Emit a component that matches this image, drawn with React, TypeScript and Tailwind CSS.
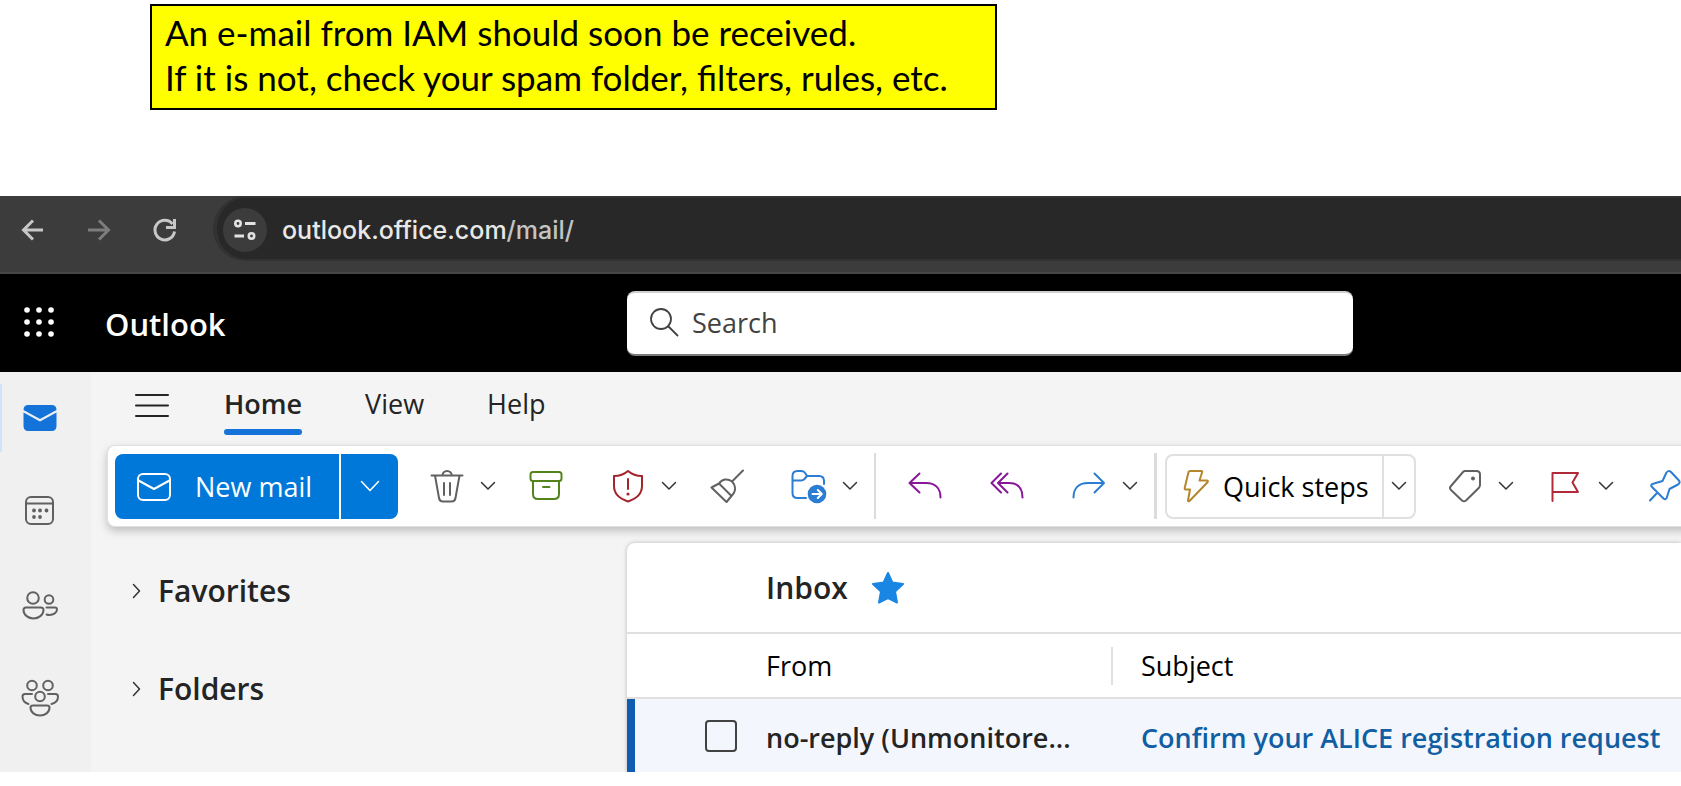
import React from 'react';

interface IconProps {
  className?: string;
  width?: number;
  height?: number;
  children: React.ReactNode;
}

function Icon({ className = '', width = 34, height = 34, children }: IconProps) {
  return (
    <svg
      className={`shrink-0 ${className}`}
      width={width}
      height={height}
      viewBox={`0 0 ${width} ${height}`}
      fill="none"
      stroke="currentColor"
      strokeWidth="2"
      strokeLinecap="round"
      strokeLinejoin="round"
      aria-hidden="true"
    >
      {children}
    </svg>
  );
}

function ChevronDown({ className = '' }: { className?: string }) {
  return (
    <Icon width={16} height={10} className={className}>
      <path d="M1.5 1.5 8 8l6.5-6.5" strokeWidth="1.5" />
    </Icon>
  );
}

function ChevronRight() {
  return (
    <Icon width={10} height={16} className="text-[#333333]">
      <path d="M1.5 1.5 7.5 8l-6 6.5" strokeWidth="1.5" />
    </Icon>
  );
}

interface ToolProps {
  label: string;
  menu?: boolean;
  className?: string;
  children: React.ReactNode;
}

function Tool({ label, menu = false, className = '', children }: ToolProps) {
  return (
    <div className={`flex shrink-0 items-center ${className}`}>
      <button type="button" aria-label={label} className="flex h-16 w-[50px] items-center justify-center">
        {children}
      </button>
      {menu && (
        <button type="button" aria-label={`${label} options`} className="flex h-16 w-8 items-center justify-center">
          <ChevronDown className="text-[#333333]" />
        </button>
      )}
    </div>
  );
}

function Notice() {
  return (
    <div className="px-[150px] pt-1">
      <div className="max-w-[847px] border-2 border-black bg-[#ffff00] pt-1 pr-2 pb-2 pl-[13px] font-['Lato',sans-serif] text-[35px] leading-[45px] text-black">
        <p>An e-mail from IAM should soon be received.</p>
        <p>If it is not, check your spam folder, filters, rules, etc.</p>
      </div>
    </div>
  );
}

function BrowserBar() {
  return (
    <div className="flex h-[78px] border-b-2 border-[#464646] bg-[#3c3c3c] pb-[11px]">
      <div className="flex w-[213px] shrink-0 items-center gap-8 pt-[2px] pl-4 text-[#c7c7c7]">
        <button type="button" aria-label="Back">
          <Icon>
            <path d="M27 17H8M17 7.5 7.5 17l9.5 9.5" strokeWidth="3" strokeLinecap="butt" strokeLinejoin="miter" />
          </Icon>
        </button>
        <button type="button" aria-label="Forward" className="text-[#7d7d7d]">
          <Icon>
            <path d="M6 17h20M17 7.5 26.5 17 17 26.5" strokeWidth="3" strokeLinecap="butt" strokeLinejoin="miter" />
          </Icon>
        </button>
        <button type="button" aria-label="Reload">
          <Icon>
            <path d="M26.5 18.5A9.8 9.8 0 1 1 24.5 11" strokeWidth="3" strokeLinecap="butt" />
            <path d="M26.5 6v8.5H18" strokeWidth="3" strokeLinecap="butt" strokeLinejoin="miter" />
          </Icon>
        </button>
      </div>
      <div className="flex flex-1 items-center rounded-l-full border-y-2 border-l-4 border-[#323232] bg-[#282828] pt-[2px] pl-[6px]">
        <button
          type="button"
          aria-label="View site information"
          className="flex h-11 w-11 shrink-0 items-center justify-center rounded-full bg-[#3c3c3c] text-[#e3e3e3]"
        >
          <Icon width={24} height={24}>
            <circle cx="5" cy="5.5" r="2.7" strokeWidth="2.6" />
            <path d="M12 5.5h10.5M1.5 18H11" strokeWidth="3" strokeLinecap="butt" />
            <circle cx="18.5" cy="18" r="2.7" strokeWidth="2.6" />
          </Icon>
        </button>
        <a href="#mail" className="ml-[15px] font-['Inter',sans-serif] text-[25px] leading-8 font-medium text-[#e8e8e8]">
          outlook.office.com<span className="text-[#c4c4c4]">/mail/</span>
        </a>
      </div>
    </div>
  );
}

function SuiteHeader() {
  const dots = [3, 15, 27];
  return (
    <header className="flex h-[98px] items-center bg-black text-white">
      <div className="flex w-[627px] shrink-0 items-center pb-[2px]">
        <button type="button" aria-label="App launcher" className="ml-6">
          <Icon width={30} height={30}>
            {dots.map((y) => dots.map((x) => <circle key={`${x}-${y}`} cx={x} cy={y} r="2.8" fill="currentColor" stroke="none" />))}
          </Icon>
        </button>
        <h1 className="ml-[51px] pt-1 text-[31px] leading-10 font-semibold">Outlook</h1>
      </div>
      <label className="flex h-[65px] w-[726px] items-center rounded-lg border-t-2 border-b-2 border-t-[#cfcfcf] border-b-[#7a7a7a] bg-white pl-[22px] text-[#424242]">
        <Icon width={30} height={30}>
          <circle cx="12" cy="11" r="10" strokeWidth="1.8" />
          <path d="m19.5 18.500 9 9" strokeWidth="1.8" />
        </Icon>
        <input
          type="text"
          aria-label="Search"
          placeholder="Search"
          className="ml-[13px] w-full bg-transparent text-[27px] leading-10 outline-none placeholder:text-[#424242]"
        />
      </label>
    </header>
  );
}

function AppRail() {
  return (
    <nav className="flex w-[91px] shrink-0 flex-col bg-[#f0f0f0] text-[#616161]">
      <a href="#mail" aria-label="Mail" className="mt-3 flex h-[68px] items-center border-l-2 border-[#cfe4fa] pl-5 text-[#1373d9]">
        <Icon width={36} height={30}>
          <path d="M1.5 9.5V23q0 5 5 5h23q5 0 5-5V9.5L18 18.5Z" fill="currentColor" stroke="none" />
          <path d="M1.5 7q0-5 5-5h23q5 0 5 5L18 16Z" fill="currentColor" stroke="none" />
        </Icon>
      </a>
      <a href="#calendar" aria-label="Calendar" className="mt-6 flex h-[68px] items-center pl-[22px]">
        <Icon>
          <rect x="4" y="4" width="27" height="27" rx="5" />
          <path d="M4 10.5h27" />
          <g fill="currentColor" stroke="none">
            <circle cx="12" cy="17.5" r="1.9" />
            <circle cx="18" cy="17.5" r="1.9" />
            <circle cx="24.5" cy="17.5" r="1.9" />
            <circle cx="12" cy="24" r="1.9" />
            <circle cx="18" cy="24" r="1.9" />
          </g>
        </Icon>
      </a>
      <a href="#people" aria-label="People" className="mt-[27px] flex h-[68px] items-center pl-[22px]">
        <Icon width={36} height={30}>
          <circle cx="11" cy="8" r="5.8" />
          <circle cx="27" cy="9.5" r="4.3" />
          <path d="M4 17.5h15q2.5 0 2.5 2.5c0 5-5 8.5-10 8.5S1.5 25 1.5 20q0-2.5 2.5-2.5Z" />
          <path d="M24.5 17.5H33q2 0 2 2c0 3-3.5 5.5-7.5 5.5q-1.5 0-3-.5" />
        </Icon>
      </a>
      <a href="#groups" aria-label="Groups" className="mt-[25px] flex h-[68px] items-center pl-[21px]">
        <Icon width={38} height={38}>
          <circle cx="11" cy="6.5" r="4.8" />
          <circle cx="27" cy="6.5" r="4.8" />
          <circle cx="19" cy="17.5" r="4.8" />
          <path d="M11 15H4q-2.5 0-2.5 2.5c0 4 2.5 6.5 6 7.5M27 15h7.5q2.5 0 2.5 2.5c0 4-2.5 6.5-6.5 7.5" />
          <path d="M12 26.5h14q2.5 0 2.5 2c0 5-4.5 8-9.5 8s-9.5-3-9.5-8q0-2 2.5-2Z" />
        </Icon>
      </a>
    </nav>
  );
}

function RibbonTabs() {
  return (
    <div className="flex h-[73px] items-start pt-3 pl-11 text-[27px] leading-10 text-[#242424]">
      <button type="button" aria-label="Toggle navigation pane" className="mt-2">
        <Icon width={34} height={26}>
          <path d="M1 3h32M1 13.5h32M1 24h32" />
        </Icon>
      </button>
      <button type="button" className="ml-[55px] font-semibold">
        Home
        <span className="mt-[5px] block h-[6px] rounded-full bg-[#1373d9]" />
      </button>
      <button type="button" className="ml-[63px]">View</button>
      <button type="button" className="ml-[63px]">Help</button>
    </div>
  );
}

function Ribbon() {
  return (
    <div
      role="toolbar"
      aria-label="Mail actions"
      className="relative -mr-4 ml-4 flex h-[82px] items-center overflow-hidden rounded-l-lg border border-r-0 border-[#e0e0e0] bg-white pl-[7px] text-[#616161] shadow-[0_4px_8px_rgba(0,0,0,0.22)]"
    >
      <div className="flex h-[65px] shrink-0 gap-[2px] text-white">
        <button type="button" className="flex w-[224px] items-center rounded-l-lg bg-[#0078d9] pt-[2px] pl-[21px] text-[27px] leading-10">
          <Icon width={36} height={30}>
            <rect x="2" y="2" width="32" height="26" rx="5" />
            <path d="m2.5 8.5 15.500 8.500 15.500-8.500" />
          </Icon>
          <span className="ml-[23px]">New mail</span>
        </button>
        <button type="button" aria-label="New mail options" className="flex w-[57px] items-center justify-center rounded-r-lg bg-[#0078d9]">
          <Icon width={20} height={12}>
            <path d="m1.5 1.5 8.5 9 8.5-9" strokeWidth="1.6" />
          </Icon>
        </button>
      </div>

      <div className="ml-6 flex shrink-0 items-center gap-[17px]">
        <Tool label="Delete" menu>
          <Icon>
            <path d="M1.5 6.5h31M5 6.5l4 22.5q.6 3.5 4 3.5h8.5q3.4 0 4-3.5L29.500 6.5M12.5 6.5a4.6 4.6 0 0 1 9.200 0M14 14v12M20 14v12" />
          </Icon>
        </Tool>
        <Tool label="Archive" className="mr-[15px] text-[#55831b]">
          <Icon>
            <rect x="1.5" y="3" width="31" height="9" rx="2.5" />
            <path d="M4 12V25q0 5 5 5h16q5 0 5-5V12M14 18h6.5" />
          </Icon>
        </Tool>
        <Tool label="Report" menu className="text-[#a4262c]">
          <Icon>
            <path d="M17 2c4 3.5 8.5 5 14 5v10c0 7.5-5 12.5-14 15.5C8 29.5 3 24.5 3 17V7c5.5 0 10-1.5 14-5Z" />
            <path d="M17 10v10" />
            <circle cx="17" cy="25" r="1.6" fill="currentColor" stroke="none" />
          </Icon>
        </Tool>
        <Tool label="Sweep" className="mr-[15px]">
          <Icon>
            <path d="M33 1.5 22 12.5M9 14.5C12 10 17.500 9 22 12.5c4.500 4.500 4 10-1 15M1.500 18.500 9 14.500l12.500 12.500L16.500 33Z" />
          </Icon>
        </Tool>
        <Tool label="Move to" menu className="text-[#2b7cd3]">
          <Icon width={36} height={36}>
            <path d="M15 30H6.5Q1.5 30 1.5 25V8q0-5 5-5h4q2.5 0 4 2.5L16 8h12q5 0 5 5v3M1.500 12.5h8.5q2 0 3.5-1.5L16 8" />
            <circle cx="26" cy="26" r="9.3" fill="currentColor" stroke="none" />
            <path d="M21.5 26h9M26.8 22l4 4-4 4" stroke="white" />
          </Icon>
        </Tool>
      </div>

      <div className="ml-2 h-[66px] w-[2px] shrink-0 bg-[#dcdcdc]" />

      <div className="ml-6 flex shrink-0 items-center gap-8">
        <Tool label="Reply" className="text-[#881798]">
          <Icon>
            <path d="M11.5 4.5 1.5 14l10 9.5M2 14h16c9 0 14.5 5 14.5 14.5" />
          </Icon>
        </Tool>
        <Tool label="Reply all" className="text-[#881798]">
          <Icon>
            <path d="M11 4.5 1.5 14l9.5 9.5M17.5 4.5 8 14l9.5 9.5M8.5 14H19c8.5 0 13.5 5 13.5 14.5" />
          </Icon>
        </Tool>
        <Tool label="Forward" menu className="text-[#2b7cd3]">
          <Icon>
            <path d="m22.5 4.5 9.5 9.5-9.5 9.5M32 14H16C7 14 1.5 19 1.5 28.5" />
          </Icon>
        </Tool>
      </div>

      <div className="ml-2 h-[66px] w-[3px] shrink-0 bg-[#dcdcdc]" />

      <div className="ml-2 flex h-[65px] w-[251px] shrink-0 rounded-lg border-2 border-[#e0e0e0] text-black">
        <button type="button" className="flex flex-1 items-center pt-[2px] pl-4 text-[27px] leading-10">
          <Icon width={28} height={34} className="text-[#b5872c]">
            <path d="M7 1h11.5q1 0 .7 1L16.500 10.500H24q1.500.5.500 1.700L6.500 31q-1.500 1-1.500-.8L7 19.500H2.500q-1-.2-.8-1.400L5.500 2Q6 1 7 1Z" />
          </Icon>
          <span className="ml-3 whitespace-nowrap">Quick steps</span>
        </button>
        <button
          type="button"
          aria-label="Quick steps options"
          className="flex w-8 items-center justify-center border-l-2 border-[#e0e0e0]"
        >
          <ChevronDown className="text-[#333333]" />
        </button>
      </div>

      <div className="ml-6 flex shrink-0 items-center gap-[18px]">
        <Tool label="Categorize" menu>
          <Icon>
            <path d="M17 2h11.5q3.5 0 3.5 3.5V16q0 1.500-1.300 3L18 31.500q-2 1.500-4 0l-11-10.500q-2-2 0-4L15 3q1-1 2-1Z" />
            <circle cx="25" cy="9.5" r="2" fill="currentColor" stroke="none" />
          </Icon>
        </Tool>
        <Tool label="Flag" menu className="text-[#b02a37]">
          <Icon>
            <path d="M4.5 32V4H30l-5.500 9.500 5.500 9.500H4.500" />
          </Icon>
        </Tool>
        <Tool label="Pin" className="text-[#2b7cd3]">
          <Icon>
            <path d="m18.5 3.5-4 8.5L6 14.5q-4.500 1-2 3.500l11.500 11.500q2.500 2 3.500-1.500l2.500-8 8.500-4.500q3-2 .5-4.500l-7.500-8q-2.500-2-4.500.5ZM9.500 23.500 2 31.500" />
          </Icon>
        </Tool>
      </div>
    </div>
  );
}

function FolderPane() {
  return (
    <div className="flex w-[536px] shrink-0 flex-col items-start gap-[58px] pt-11 pl-[41px] text-[30px] leading-10 font-semibold text-[#242424]">
      <button type="button" className="flex items-center gap-4">
        <ChevronRight />
        Favorites
      </button>
      <button type="button" className="flex items-center gap-4">
        <ChevronRight />
        Folders
      </button>
    </div>
  );
}

function MessageList() {
  return (
    <section className="mt-4 min-w-0 flex-1 overflow-hidden rounded-tl-lg bg-white shadow-[0_0_4px_rgba(0,0,0,0.25)]">
      <div className="flex h-[91px] items-center border-b-2 border-[#e0e0e0] pl-[139px]">
        <h2 className="text-[30px] leading-10 font-semibold text-[#242424]">Inbox</h2>
        <button type="button" aria-label="Remove from favorites" className="ml-[23px] text-[#1a86e3]">
          <Icon>
            <path
              d="m17 2 4.3 9.5 10.700 1.500-8 7.500L26 31.500l-9-4.500-9 4.500 2-11L2 13l10.700-1.500Z"
              fill="currentColor"
            />
          </Icon>
        </button>
      </div>
      <table className="w-full table-fixed border-collapse text-left whitespace-nowrap">
        <thead>
          <tr className="h-16 border-b-2 border-[#e0e0e0] text-[27px] leading-10 text-black">
            <th className="w-[139px]" aria-label="Selection" />
            <th className="w-[347px] p-0 font-normal">
              <div className="flex h-[38px] items-center border-r-2 border-[#e0e0e0]">From</div>
            </th>
            <th className="py-0 pl-7 font-normal">Subject</th>
          </tr>
        </thead>
        <tbody>
          <tr className="h-[73px] bg-[#f3f7fd] text-[27px] leading-10 font-semibold">
            <td className="p-0">
              <div className="flex h-[73px] items-center border-l-8 border-[#0f5cb0] pl-[70px]">
                <input
                  type="checkbox"
                  aria-label="Select message from no-reply"
                  className="h-8 w-8 appearance-none rounded-[4px] border-2 border-[#424242]"
                />
              </div>
            </td>
            <td className="overflow-hidden p-0 pt-1 text-[#242424]">no-reply (Unmonitore...</td>
            <td className="py-0 pt-1 pl-7">
              <a href="#message" className="text-[#115ea3]">Confirm your ALICE registration request</a>
            </td>
          </tr>
        </tbody>
      </table>
    </section>
  );
}

export default function App() {
  return (
    <div className="overflow-hidden bg-white font-['Open_Sans','Noto_Sans',sans-serif]">
      <Notice />
      <div className="mt-[86px]">
        <BrowserBar />
        <SuiteHeader />
        <div className="flex bg-[#f4f4f4]">
          <AppRail />
          <main className="min-w-0 flex-1">
            <RibbonTabs />
            <Ribbon />
            <div className="flex">
              <FolderPane />
              <MessageList />
            </div>
          </main>
        </div>
      </div>
    </div>
  );
}
